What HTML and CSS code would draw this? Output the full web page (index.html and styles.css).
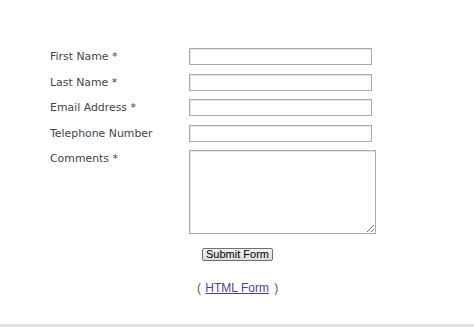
FILE: index.html
```html
<!DOCTYPE html>
<html>
<head>
<meta charset="utf-8">
<link rel="stylesheet" href="styles.css">
</head>
<body>
<div class="page">
  <form class="form">
    <label class="lbl" for="f1">First Name *</label>
    <input class="field" id="f1" type="text">
    <label class="lbl" for="f2">Last Name *</label>
    <input class="field" id="f2" type="text">
    <label class="lbl" for="f3">Email Address *</label>
    <input class="field" id="f3" type="text">
    <label class="lbl" for="f4">Telephone Number</label>
    <input class="field" id="f4" type="text">
    <label class="lbl" for="f5">Comments *</label>
    <textarea class="area" id="f5"></textarea>
    <div class="actions">
      <button type="button" class="submit">Submit Form</button>
    </div>
    <div class="credit">( <a href="#" class="link">HTML Form</a> )</div>
  </form>
  <div class="bar"></div>
</div>
</body>
</html>
```
FILE: styles.css
```css
html, body {
  margin: 0;
  padding: 0;
  background: #ffffff;
}
.page {
  min-height: 100vh;
  display: flex;
  flex-direction: column;
}
.form {
  display: grid;
  grid-template-columns: 139px auto;
  row-gap: 8.6px;
  align-items: start;
  justify-items: start;
  padding: 48px 0 0 50px;
}
.lbl {
  font-family: "DejaVu Sans", Verdana, sans-serif;
  font-size: 10.9px;
  line-height: 17px;
  color: #444444;
}
.field {
  box-sizing: border-box;
  width: 183px;
  height: 17px;
  margin: 0;
  padding: 0 2px;
  border: 1px solid #ababab;
  box-shadow: inset 1px 1px 0 #e6e6e6;
  background: #fff;
  outline: none;
}
.area {
  box-sizing: border-box;
  width: 187px;
  height: 84px;
  margin: 0;
  padding: 2px;
  border: 1px solid #ababab;
  box-shadow: inset 1px 1px 0 #e6e6e6;
  background: #fff;
  resize: both;
  outline: none;
}
.actions {
  grid-column: 2;
  display: flex;
  margin-top: 5px;
  padding-left: 13px;
}
.submit {
  font-family: "Liberation Sans", Arial, sans-serif;
  font-size: 11px;
  line-height: 11px;
  height: 13px;
  padding: 0 3px;
  margin: 0;
  color: #000;
  border: 1px solid #707070;
  border-radius: 2px;
  background: linear-gradient(#f2f2f2, #dcdcdc);
  cursor: pointer;
}
.credit {
  grid-column: 2;
  margin-top: 11px;
  padding-left: 8px;
  font-family: "Liberation Sans", Arial, sans-serif;
  font-size: 12px;
  line-height: 14px;
  color: #555;
}
.link {
  color: #5b3b96;
  margin: 0 2px 0 1px;
}
.bar {
  margin-top: auto;
  height: 3px;
  background: #e2e2e0;
}
```
